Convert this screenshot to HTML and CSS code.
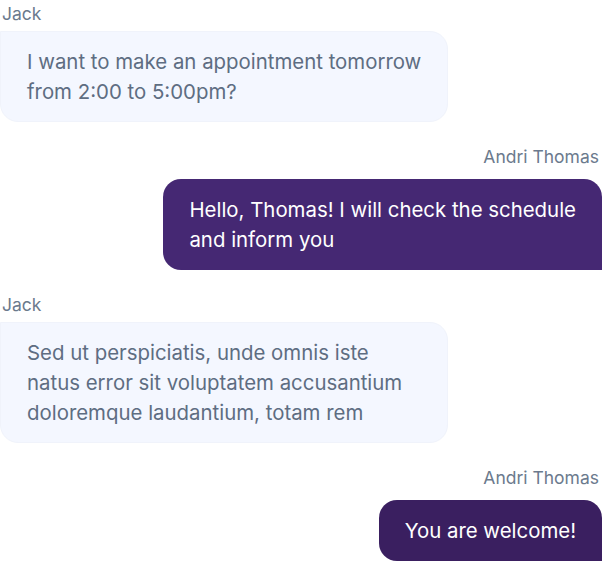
FILE: index.html
```html
<!DOCTYPE html>
<html>
<head>
<meta charset="utf-8">
<link rel="stylesheet" href="styles.css">
</head>
<body>
<div class="chat">
  <div class="msg msg-in msg-first">
    <div class="name">Jack</div>
    <div class="bubble bubble-in">I want to make an appointment tomorrow<br>from 2:00 to 5:00pm?</div>
  </div>
  <div class="msg msg-out">
    <div class="name">Andri Thomas</div>
    <div class="bubble bubble-out bubble-out-a">Hello, Thomas! I will check the schedule<br>and inform you</div>
  </div>
  <div class="msg msg-in">
    <div class="name">Jack</div>
    <div class="bubble bubble-in">Sed ut perspiciatis, unde omnis iste<br>natus error sit voluptatem accusantium<br>doloremque laudantium, totam rem</div>
  </div>
  <div class="msg msg-out">
    <div class="name">Andri Thomas</div>
    <div class="bubble bubble-out bubble-out-b">You are welcome!</div>
  </div>
</div>
</body>
</html>
```

FILE: styles.css
```css
* { box-sizing: border-box; }
html, body {
  margin: 0;
  padding: 0;
  background: #ffffff;
  font-family: Inter, "Noto Sans", sans-serif;
}
.chat {
  display: flex;
  flex-direction: column;
  padding-top: 3px;
}
.msg {
  display: flex;
  flex-direction: column;
  margin-top: 24px;
}
.msg-first { margin-top: 0; }
.msg-in { align-items: flex-start; }
.msg-out { align-items: flex-end; }
.name {
  font-size: 17.5px;
  line-height: 22px;
  color: #6b7a8d;
}
.msg-in .name { padding-left: 2px; margin-bottom: 6px; }
.msg-out .name { padding-right: 3px; margin-bottom: 11px; }
.bubble {
  font-size: 20.4px;
  line-height: 30px;
  padding: 16px 26px 15px 26px;
  white-space: nowrap;
  border-radius: 18px;
}
.bubble-in {
  width: 448px;
  padding-top: 15px;
  padding-bottom: 14px;
  background: #f4f7ff;
  border: 1px solid #f0f3fb;
  color: #5e6d82;
  border-top-left-radius: 0;
}
.bubble-out {
  color: #ffffff;
  border-bottom-right-radius: 0;
}
.bubble-out-a { background: #452873; }
.bubble-out-b { background: #3a1f60; }
```
